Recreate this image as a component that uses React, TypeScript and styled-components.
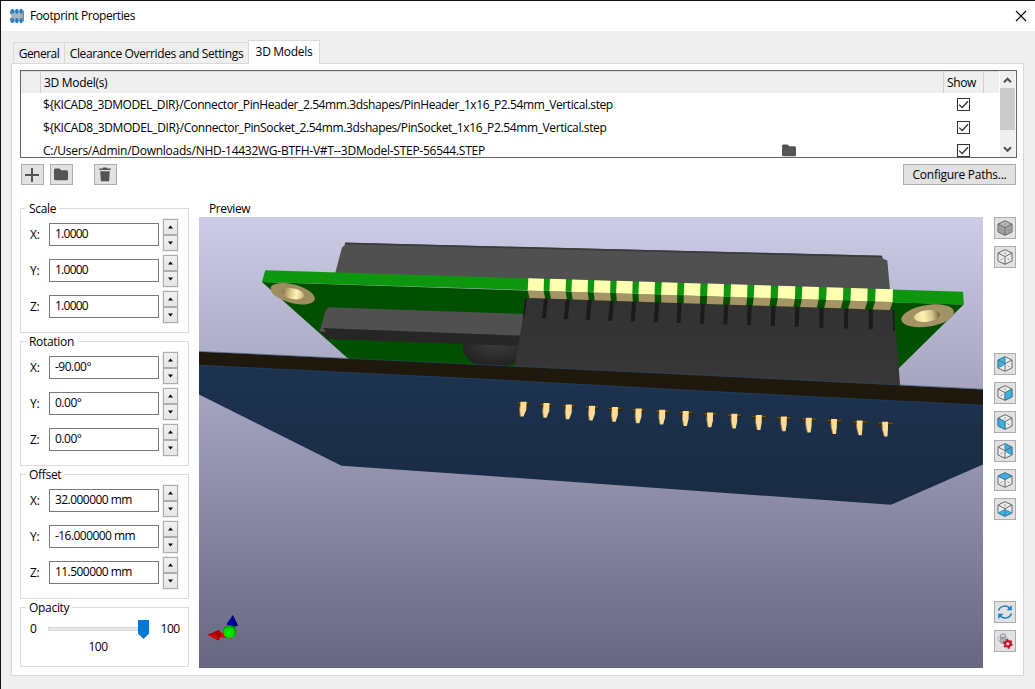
import React from 'react';
import styled, { createGlobalStyle } from 'styled-components';

const GlobalStyle = createGlobalStyle`
  * { box-sizing: border-box; }
  body {
    margin: 0;
    background: #efefef;
    font-family: "Open Sans", "Noto Sans", sans-serif;
    font-size: 12px;
    line-height: 18px;
    color: #000;
    overflow: hidden;
  }
`;

const T = styled.span<{ $ls?: number }>`
  white-space: pre;
  letter-spacing: ${p => p.$ls ?? -0.3}px;
`;

const Window = styled.div`
  width: 1035px;
  height: 689px;
  display: flex;
  flex-direction: column;
  background: #efefef;
  border-top: 1px solid #15121a;
  border-left: 1px solid #15121a;
`;

const TitleBar = styled.header`
  height: 30px;
  flex: none;
  display: flex;
  align-items: center;
  padding: 0 8px 0 9px;
  background: #fff;
`;

const TitleText = styled.h1`
  flex: 1;
  margin: 0 0 0 6px;
  font-size: 12px;
  font-weight: 400;
`;

const Tabs = styled.nav`
  display: flex;
  align-items: flex-end;
  height: 33px;
  flex: none;
  padding-left: 12px;
  margin-bottom: -1px;
  z-index: 1;
`;

const Tab = styled.div<{ $w: number; $active?: boolean }>`
  width: ${p => p.$w}px;
  height: ${p => (p.$active ? 24 : 21)}px;
  margin-bottom: ${p => (p.$active ? 0 : 1)}px;
  padding-top: ${p => (p.$active ? 0 : 2)}px;
  padding-bottom: ${p => (p.$active ? 2 : 0)}px;
  display: flex;
  align-items: center;
  justify-content: center;
  border: 1px solid #d9d9d9;
  border-bottom: 0;
  border-right-width: ${p => (p.$active ? 1 : 0)}px;
  background: ${p => (p.$active ? '#fff' : '#efefef')};
`;

const Page = styled.main`
  width: 1013px;
  height: 613px;
  flex: none;
  margin-left: 10px;
  padding: 6px 6px 0 8px;
  border: 1px solid #d9d9d9;
  background: #fff;
  display: flex;
  flex-direction: column;
`;

const ModelTable = styled.div`
  height: 88px;
  flex: none;
  display: flex;
  border: 1px solid #646468;
  background: #fff;
`;

const TableBody = styled.div`
  flex: 1;
  height: 86px;
  overflow: hidden;
`;

const HeaderRow = styled.div`
  display: grid;
  grid-template-columns: 19px 903px 40px 1fr;
  height: 22px;
  margin-right: 1px;
  background: #efefef;
  border-top: 1px solid #dcdcdc;
`;

const HeaderCell = styled.div<{ $pad?: number }>`
  display: flex;
  align-items: center;
  padding: 1px 0 0 ${p => p.$pad ?? 0}px;
  border-left: ${p => (p.$pad === undefined ? 0 : 1)}px solid #d0d0d0;
`;

const Row = styled.div`
  display: grid;
  grid-template-columns: 745px 175px 40px;
  align-items: center;
  height: 23px;
  padding-left: 16px;
`;

const Cell = styled.div<{ $pad?: number }>`
  display: flex;
  align-items: center;
  padding-left: ${p => p.$pad ?? 0}px;
`;

const Scroll = styled.div`
  width: 16px;
  display: flex;
  flex-direction: column;
  align-items: center;
  background: #efefef;
  border-right: 1px solid #f7f7f7;
`;

const ScrollEnd = styled.div<{ $pt?: number }>`
  height: 17px;
  padding-top: ${p => p.$pt ?? 0}px;
  display: flex;
  align-items: center;
`;

const Thumb = styled.div`
  width: 15px;
  height: 42px;
  background: #cbcbcb;
  margin-bottom: 10px;
`;

const Toolbar = styled.div`
  display: flex;
  height: 21px;
  flex: none;
  margin: 6px 1px 0 1px;
`;

const Button = styled.button<{ $w: number; $h: number; $ml?: number; $pr?: number; $push?: boolean }>`
  width: ${p => p.$w}px;
  height: ${p => p.$h}px;
  flex: none;
  margin-left: ${p => (p.$push ? 'auto' : `${p.$ml ?? 0}px`)};
  padding: 0 ${p => p.$pr ?? 0}px 0 0;
  display: flex;
  align-items: center;
  justify-content: center;
  background: #e1e1e1;
  border: 1px solid #adadad;
  font: inherit;
  color: #000;
`;

const Content = styled.div`
  display: flex;
  margin-top: 14px;
`;

const Side = styled.div`
  width: 169px;
  padding-top: 9px;
  margin-right: 10px;
  display: flex;
  flex-direction: column;
  gap: 8px;
`;

const Group = styled.section<{ $h: number }>`
  height: ${p => p.$h}px;
  display: flex;
  flex-direction: column;
  border: 1px solid #dcdcdc;
`;

const Legend = styled.div`
  align-self: flex-start;
  height: 18px;
  margin: -9px 0 1px 5px;
  padding: 0 3px;
  background: #fff;
`;

const Field = styled.div`
  height: 32px;
  margin-bottom: 4px;
  display: flex;
  align-items: flex-start;
  padding-left: 9px;
`;

const FieldLabel = styled.label`
  width: 19px;
  padding-top: 7px;
`;

const Input = styled.div`
  width: 110px;
  height: 23px;
  margin: 4px 4px 0 0;
  padding-left: 5px;
  line-height: 20px;
  border: 1px solid #7a7a7a;
  background: #fff;
`;

const Spin = styled.div`
  width: 15px;
  height: 32px;
  display: flex;
  flex-direction: column;
  outline: 1px solid #f0f0f0;
`;

const SpinButton = styled.div`
  height: 16px;
  display: flex;
  align-items: center;
  justify-content: center;
  border: 1px solid #adadad;
  background: linear-gradient(#f0f0f0, #e5e5e5);
`;

const SliderRow = styled.div`
  display: flex;
  align-items: center;
  height: 20px;
  padding-left: 9px;
  margin-top: 1px;
`;

const Track = styled.div`
  width: 102px;
  height: 20px;
  margin: 0 11px;
  display: flex;
  align-items: center;
`;

const Rail = styled.div`
  width: 90px;
  height: 4px;
  border: 1px solid #d6d6d6;
  border-right: 0;
  background: #e7eaea;
`;

const SliderValue = styled.div`
  width: 154px;
  margin-top: -1px;
  text-align: center;
`;

const PreviewColumn = styled.div`
  width: 784px;
  margin-right: 11px;
`;

const PreviewLabel = styled.div`
  height: 18px;
  padding: 1px 0 0 10px;
`;

const Scene = styled.svg`
  display: block;
`;

const ViewBar = styled.div`
  padding-top: 18px;
  display: flex;
  flex-direction: column;
`;

const ViewGroup = styled.div<{ $mt?: number }>`
  display: flex;
  flex-direction: column;
  gap: 7px;
  margin-top: ${p => p.$mt ?? 0}px;
`;

const FolderIcon = () => (
  <svg width="14" height="13" viewBox="0 0 14 13">
    <path d="M0 2Q0 .5 1.5 .5H5Q6 .5 6.6 1.4L7.2 2.2H12.5Q14 2.2 14 3.7V10.8Q14 12.3 12.5 12.3H1.5Q0 12.3 0 10.8Z" fill="#545454" />
  </svg>
);

const CheckBox = () => (
  <svg width="13" height="13" viewBox="0 0 13 13">
    <rect x=".5" y=".5" width="12" height="12" fill="#fff" stroke="#333" />
    <path d="M2.2 6.6L5.2 9.5L11 3.3" fill="none" stroke="#333" strokeWidth="1.3" />
  </svg>
);

const Chevron = ({ down }: { down?: boolean }) => (
  <svg width="9" height="7" viewBox="0 0 9 7">
    <path d={down ? 'M1 1.2L4.5 4.8L8 1.2' : 'M1 5.3L4.5 1.7L8 5.3'} fill="none" stroke="#505050" strokeWidth="2" />
  </svg>
);

const Arrow = ({ down }: { down?: boolean }) => (
  <svg width="7" height="4" viewBox="0 0 7 4">
    <path d={down ? 'M1 .5H6L3.5 3.5Z' : 'M1 3.5H6L3.5 .5Z'} fill="#000" />
  </svg>
);

const faces: Record<string, string> = {
  left: '1,4 8,.7 8,8 1,12',
  right: '8,8 15,4 15,12 8,15.3',
  front: '1,4 8,8 8,15.3 1,12',
  back: '8,.7 15,4 15,12 8,8',
  top: '8,.7 15,4 8,7.6 1,4',
  bottom: '1,12 8,8.4 15,12 8,15.3',
};

const Cube = ({ face }: { face?: string }) => {
  const solid = face === 'solid';
  return (
    <svg width="16" height="16" viewBox="0 0 16 16">
      <path d="M8 .7L15 4V12L8 15.3L1 12V4Z" fill={solid ? '#a2a2a2' : '#ececec'} />
      {solid && <path d="M1 4L8 .7L15 4L8 7.6Z" fill="#b9b9b9" />}
      {face && !solid && <polygon points={faces[face]} fill="#39b4ea" />}
      <path d="M8 3V5.4M3.5 10.8L5.6 9.6M12.5 10.8L10.4 9.6" stroke="#8a8a8a" strokeWidth=".9" fill="none" />
      <path d="M8 .7L15 4V12L8 15.3L1 12V4Z" fill="none" stroke="#6a6a6a" strokeWidth="1" />
      <path d="M1 4L8 7.6L15 4M8 7.6V15.3" fill="none" stroke="#6a6a6a" strokeWidth="1" />
      {face && !solid && <polygon points={faces[face]} fill="none" stroke="#2689bd" strokeWidth=".7" />}
    </svg>
  );
};

const AppIcon = () => (
  <svg width="14" height="14" viewBox="0 0 14 14">
    <path d="M0 1.5H14V12.5H0V9A2 2 0 0 0 0 5Z" fill="#7f8a93" />
    <rect x="1.5" y="3" width="11" height="8" fill="#a9b3bd" />
    {[1.2, 5.5, 9.8].map(x => (
      <g key={x} fill="#1a81c4">
        <rect x={x} y="0" width="2.6" height="4.6" rx=".6" />
        <rect x={x} y="9.2" width="2.6" height="4.8" rx=".6" />
      </g>
    ))}
  </svg>
);

const slotX = [544.7, 566.7, 588.7, 611, 633.3, 656.3, 679, 702.3, 725.7, 749.2, 773, 797, 821.3, 846, 870.7];
const padX: [number, number][] = [
  [528.3, 544], [550, 566], [572, 588], [594.3, 610.5], [616.7, 632.7], [639, 655], [661.7, 677.5], [684.3, 700.5],
  [707.7, 724], [731, 747.5], [754.3, 771], [778.3, 795.3], [802.3, 819], [826.7, 843.3], [851, 867.7], [875.7, 893],
];
const pinX = [522.5, 545.5, 568, 591.3, 614.3, 638, 661.7, 685.3, 709.7, 734, 758.6, 783.7, 808.7, 834, 859.7, 885.3];

const lerp = (x: number, a: number, b: number) => a + ((x - 528) / 365) * (b - a);

const BoardScene = () => (
  <Scene width="784" height="451" viewBox="199 217 784 451">
    <defs>
      <linearGradient id="sky" x1="0" y1="0" x2="0" y2="1">
        <stop offset="0" stopColor="#cccce6" />
        <stop offset="1" stopColor="#666680" />
      </linearGradient>
      <linearGradient id="blue" x1="0" y1="0" x2="0" y2="1">
        <stop offset="0" stopColor="#1c3350" />
        <stop offset="1" stopColor="#1a2b43" />
      </linearGradient>
      <linearGradient id="block" x1="0" y1="0" x2="0" y2="1">
        <stop offset="0" stopColor="#323232" />
        <stop offset="1" stopColor="#393737" />
      </linearGradient>
      <linearGradient id="hole" x1="0" y1="0" x2="1" y2="0">
        <stop offset="0" stopColor="#85764a" />
        <stop offset=".35" stopColor="#d3c48b" />
        <stop offset=".65" stopColor="#fff3b4" />
        <stop offset="1" stopColor="#cdbb83" />
      </linearGradient>
      <linearGradient id="holeR" x1="0" y1="0" x2="1" y2="0">
        <stop offset="0" stopColor="#e5d597" />
        <stop offset=".35" stopColor="#fff3b4" />
        <stop offset=".7" stopColor="#d3c48b" />
        <stop offset="1" stopColor="#6b5d36" />
      </linearGradient>
      <radialGradient id="knob" cx=".55" cy=".3" r=".7">
        <stop offset="0" stopColor="#404040" />
        <stop offset="1" stopColor="#202020" />
      </radialGradient>
      <radialGradient id="ball" cx=".45" cy=".6" r=".6">
        <stop offset="0" stopColor="#00f000" />
        <stop offset=".6" stopColor="#00d800" />
        <stop offset="1" stopColor="#007800" />
      </radialGradient>
    </defs>
    <rect x="199" y="217" width="784" height="451" fill="url(#sky)" />

    <path d="M345.5 242.7L882 255.7L883 258.8L887.3 260.5L890 290L335 274L342 247.5L344.3 245.5Z" fill="#505050" />
    <path d="M345 243.4L882 256.6" stroke="#3a3a3c" strokeWidth="1.6" />

    <path d="M262 282L963.6 304.5L898 369L898 385L365 362L348 358.5Z" fill="#005000" />
    <path d="M265.2 270.3L963 291.7L963.9 304.7L479 288.5L262 282Z" fill="#0e960e" />

    <ellipse cx="292.7" cy="293.7" rx="22.8" ry="9.3" transform="rotate(15 292.7 293.7)" fill="#9d8d60" />
    <ellipse cx="293" cy="293.7" rx="11" ry="5.4" transform="rotate(12 293 293.7)" fill="url(#hole)" />
    <ellipse cx="927.7" cy="315.8" rx="26.6" ry="10.8" transform="rotate(-9 927.7 315.8)" fill="#a29264" />
    <ellipse cx="927" cy="316" rx="13" ry="5.8" transform="rotate(-8 927 316)" fill="url(#holeR)" />

    <ellipse cx="494" cy="348" rx="31" ry="20" fill="url(#knob)" />
    <path d="M323 328L522 335L520 346L328 339L319.5 331.5Z" fill="#262626" />
    <path d="M328 307.3L525 314L520 335.6L323 328L326 331.5L319.5 331.8L325 312Z" fill="#505050" />

    <path d="M526 297L894 309.5L894 330L896 332L900.3 388L514.5 369L523 317Z" fill="url(#block)" />
    <path d="M525 299L527 299L524.3 317L523 317Z" fill="#1a1a1a" />
    <path d="M892.5 310L894 310L895 331L893.5 331Z" fill="#1a1a1a" />
    {slotX.map((x, i) => {
      const y = lerp(x, 298, 310);
      const s = 0.8 - i * 0.08;
      return <path key={x} d={`M${x - 1.6 + s} ${y}H${x + 2.4 + s}L${x + 1.8 - s} ${y + 20}H${x - 2.2 - s}Z`} fill="#1b1b1b" />;
    })}
    <path d="M528 290.4L893 302L890 310L530 298Z" fill="#005000" />
    {padX.map(([a, b]) => {
      const t = (a - 528) / 365;
      const s = 1.2 - t * 4.5;
      return (
        <g key={a}>
          <path d={`M${a - 0.5} ${lerp(a, 290.4, 302)}L${b - 0.3} ${lerp(b, 290.4, 302)}L${b + s} ${lerp(b, 298, 310)}L${a + s} ${lerp(a, 298, 310)}Z`} fill="#a59466" />
          <path d={`M${a} ${lerp(a, 278.2, 289.2)}L${b} ${lerp(b, 278.2, 289.2)}L${b - 0.4} ${lerp(b, 290.4, 302)}L${a - 0.6} ${lerp(a, 290.4, 302)}Z`} fill="#ffffb2" />
        </g>
      );
    })}

    <path d="M199 364L490 378.5L750 392.5L983 404.3V464.5L891 504.8L490 476L341.5 465.7L199 394.5Z" fill="url(#blue)" />
    <path d="M199 351.7L470 364.4L750 377.8L983 389.4V405L750 393.3L490 379.2L199 365Z" fill="#1f180d" />
    <path d="M199 351.4L470 364.1L750 377.5L983 389.1M199 365.2L490 379.5L750 393.5L983 405.2" fill="none" stroke="#284a74" strokeWidth=".5" />

    {pinX.map((x, i) => {
      const y = 401.7 + i * 1.34;
      const k = (8 - i) * 0.08;
      const r = 7 + i * 0.12;
      return (
        <g key={x}>
          <ellipse cx={x + k + 0.6} cy={y + 2} rx={r} ry="2.2" transform={`rotate(${4 - i * 0.5} ${x} ${y + 2})`} fill="#33270c" />
          <path d={`M${x - r + 2} ${y + 1.4}H${x + r - 1}`} stroke="#6d5218" strokeWidth="1.3" />
          <path d={`M${x - 2.6 + k} ${y}H${x + 3.4 + k}L${x + 3.2 + k} ${y + 8}L${x + 1.6 - k} ${y + 14.8}H${x - 1.5 - k}L${x - 2.7} ${y + 8}Z`} fill="#ffdb95" />
          <path d={`M${x - 2.8 + k} ${y + 3}L${x - 2.8} ${y + 8}L${x - 1.6 - k} ${y + 14.4}`} fill="none" stroke="#b48c4b" strokeWidth=".8" />
        </g>
      );
    })}

    <path d="M218 632.2L232 633.5V638.6L218 637Z" fill="#e80000" />
    <path d="M207.6 634.8L219 629.8L221.3 634.6L218.5 640.4Z" fill="#a50000" />
    <path d="M207.6 634.8L216 634.5L218.5 640.4Z" fill="#e00000" />
    <path d="M232.8 615L237.8 625.5Q232 629 226.5 624.2Z" fill="#0000a8" />
    <path d="M232.8 615L237.8 625.5L233.5 626.5Z" fill="#000070" />
    <circle cx="229.7" cy="631.6" r="6.7" fill="url(#ball)" />
  </Scene>
);

const models = [
  { path: '${KICAD8_3DMODEL_DIR}/Connector_PinHeader_2.54mm.3dshapes/PinHeader_1x16_P2.54mm_Vertical.step', ls: -0.4 },
  { path: '${KICAD8_3DMODEL_DIR}/Connector_PinSocket_2.54mm.3dshapes/PinSocket_1x16_P2.54mm_Vertical.step', ls: -0.375 },
  { path: 'C:/Users/Admin/Downloads/NHD-14432WG-BTFH-V#T--3DModel-STEP-56544.STEP', ls: -0.26, browse: true },
];

const groups = [
  { title: 'Scale', values: ['1.0000', '1.0000', '1.0000'], ls: -0.75 },
  { title: 'Rotation', values: ['-90.00°', '0.00°', '0.00°'], ls: -0.5 },
  { title: 'Offset', values: ['32.000000 mm', '-16.000000 mm', '11.500000 mm'], ls: -0.55 },
];

export default function App() {
  return (
    <>
      <GlobalStyle />
      <Window>
        <TitleBar>
          <AppIcon />
          <TitleText><T $ls={-0.4}>Footprint Properties</T></TitleText>
          <svg width="12" height="12" viewBox="0 0 12 12">
            <path d="M1 1L11 11M11 1L1 11" stroke="#000" strokeWidth="1.1" />
          </svg>
        </TitleBar>
        <Tabs>
          <Tab $w={51}><T $ls={-0.5}>General</T></Tab>
          <Tab $w={184}><T $ls={-0.37}>Clearance Overrides and Settings</T></Tab>
          <Tab $w={72} $active><T>3D Models</T></Tab>
        </Tabs>
        <Page>
          <ModelTable>
            <TableBody>
              <HeaderRow>
                <HeaderCell />
                <HeaderCell $pad={3}><T>3D Model(s)</T></HeaderCell>
                <HeaderCell $pad={3}><T $ls={-0.4}>Show</T></HeaderCell>
                <HeaderCell $pad={0} />
              </HeaderRow>
              {models.map(m => (
                <Row key={m.path}>
                  <Cell $pad={6}><T $ls={m.ls}>{m.path}</T></Cell>
                  <Cell>{m.browse && <FolderIcon />}</Cell>
                  <Cell><CheckBox /></Cell>
                </Row>
              ))}
            </TableBody>
            <Scroll>
              <ScrollEnd $pt={1}><Chevron /></ScrollEnd>
              <Thumb />
              <ScrollEnd $pt={1}><Chevron down /></ScrollEnd>
            </Scroll>
          </ModelTable>
          <Toolbar>
            <Button $w={23} $h={21} $pr={1}>
              <svg width="14" height="14" viewBox="0 0 14 14"><path d="M7 0V14M0 7H14" stroke="#545454" strokeWidth="2" /></svg>
            </Button>
            <Button $w={23} $h={21} $ml={6} $pr={1}><FolderIcon /></Button>
            <Button $w={23} $h={21} $ml={21} $pr={1}>
              <svg width="12" height="15" viewBox="0 0 12 15">
                <path d="M.3 1.5H3.5L4.3 .5H7.7L8.5 1.5H11.7V3H.3ZM1.2 4.2H10.8L10.1 14.3H1.9Z" fill="#545454" />
              </svg>
            </Button>
            <Button $w={113} $h={21} $push><T $ls={-0.26}>Configure Paths...</T></Button>
          </Toolbar>
          <Content>
            <Side>
              {groups.map(g => (
                <Group key={g.title} $h={125}>
                  <Legend><T>{g.title}</T></Legend>
                  {g.values.map((v, i) => (
                    <Field key={i}>
                      <FieldLabel><T>{'XYZ'[i]}:</T></FieldLabel>
                      <Input><T $ls={g.ls}>{v}</T></Input>
                      <Spin>
                        <SpinButton><Arrow /></SpinButton>
                        <SpinButton><Arrow down /></SpinButton>
                      </Spin>
                    </Field>
                  ))}
                </Group>
              ))}
              <Group $h={60}>
                <Legend><T>Opacity</T></Legend>
                <SliderRow>
                  <T>0</T>
                  <Track>
                    <Rail />
                    <svg width="11" height="19" viewBox="0 0 11 19"><path d="M0 0H11V13.5L5.5 19L0 13.5Z" fill="#0078d7" /></svg>
                  </Track>
                  <T $ls={-0.5}>100</T>
                </SliderRow>
                <SliderValue><T $ls={-0.5}>100</T></SliderValue>
              </Group>
            </Side>
            <PreviewColumn>
              <PreviewLabel><T $ls={-0.4}>Preview</T></PreviewLabel>
              <BoardScene />
            </PreviewColumn>
            <ViewBar>
              <ViewGroup>
                <Button $w={22} $h={22}><Cube face="solid" /></Button>
                <Button $w={22} $h={22}><Cube /></Button>
              </ViewGroup>
              <ViewGroup $mt={85}>
                {['left', 'right', 'front', 'back', 'top', 'bottom'].map(f => (
                  <Button key={f} $w={22} $h={22}><Cube face={f} /></Button>
                ))}
              </ViewGroup>
              <ViewGroup $mt={81}>
                <Button $w={22} $h={22}>
                  <svg width="16" height="16" viewBox="0 0 16 16">
                    <path d="M1.5 6.5C3 2 9.5 0 13 4.5M14.5 9.5C13 14 6.5 16 3 11.5" fill="none" stroke="#1a81c4" strokeWidth="1.4" />
                    <path d="M14.8 1V6.3H9.5ZM1.2 15V9.7H6.5Z" fill="#1a81c4" />
                  </svg>
                </Button>
                <Button $w={22} $h={22}>
                  <svg width="16" height="16" viewBox="0 0 16 16">
                    <g fill="none" strokeWidth="1">
                      <circle cx="3.6" cy="6" r="2.8" stroke="#9cc4dc" />
                      <circle cx="8" cy="6" r="2.8" stroke="#9cc4dc" />
                      <circle cx="6" cy="3.4" r="2.6" stroke="#8d8d8d" fill="#cfcfcf" fillOpacity=".6" />
                      <circle cx="6" cy="7.5" r="3" stroke="#8d8d8d" fill="#a5a5a5" fillOpacity=".6" />
                    </g>
                    <circle cx="10.8" cy="10.8" r="2.7" fill="none" stroke="#c8102e" strokeWidth="2.2" />
                    <circle cx="10.8" cy="10.8" r="4.1" fill="none" stroke="#c8102e" strokeWidth="1.6" strokeDasharray="2.15 2.15" />
                  </svg>
                </Button>
              </ViewGroup>
            </ViewBar>
          </Content>
        </Page>
      </Window>
    </>
  );
}
